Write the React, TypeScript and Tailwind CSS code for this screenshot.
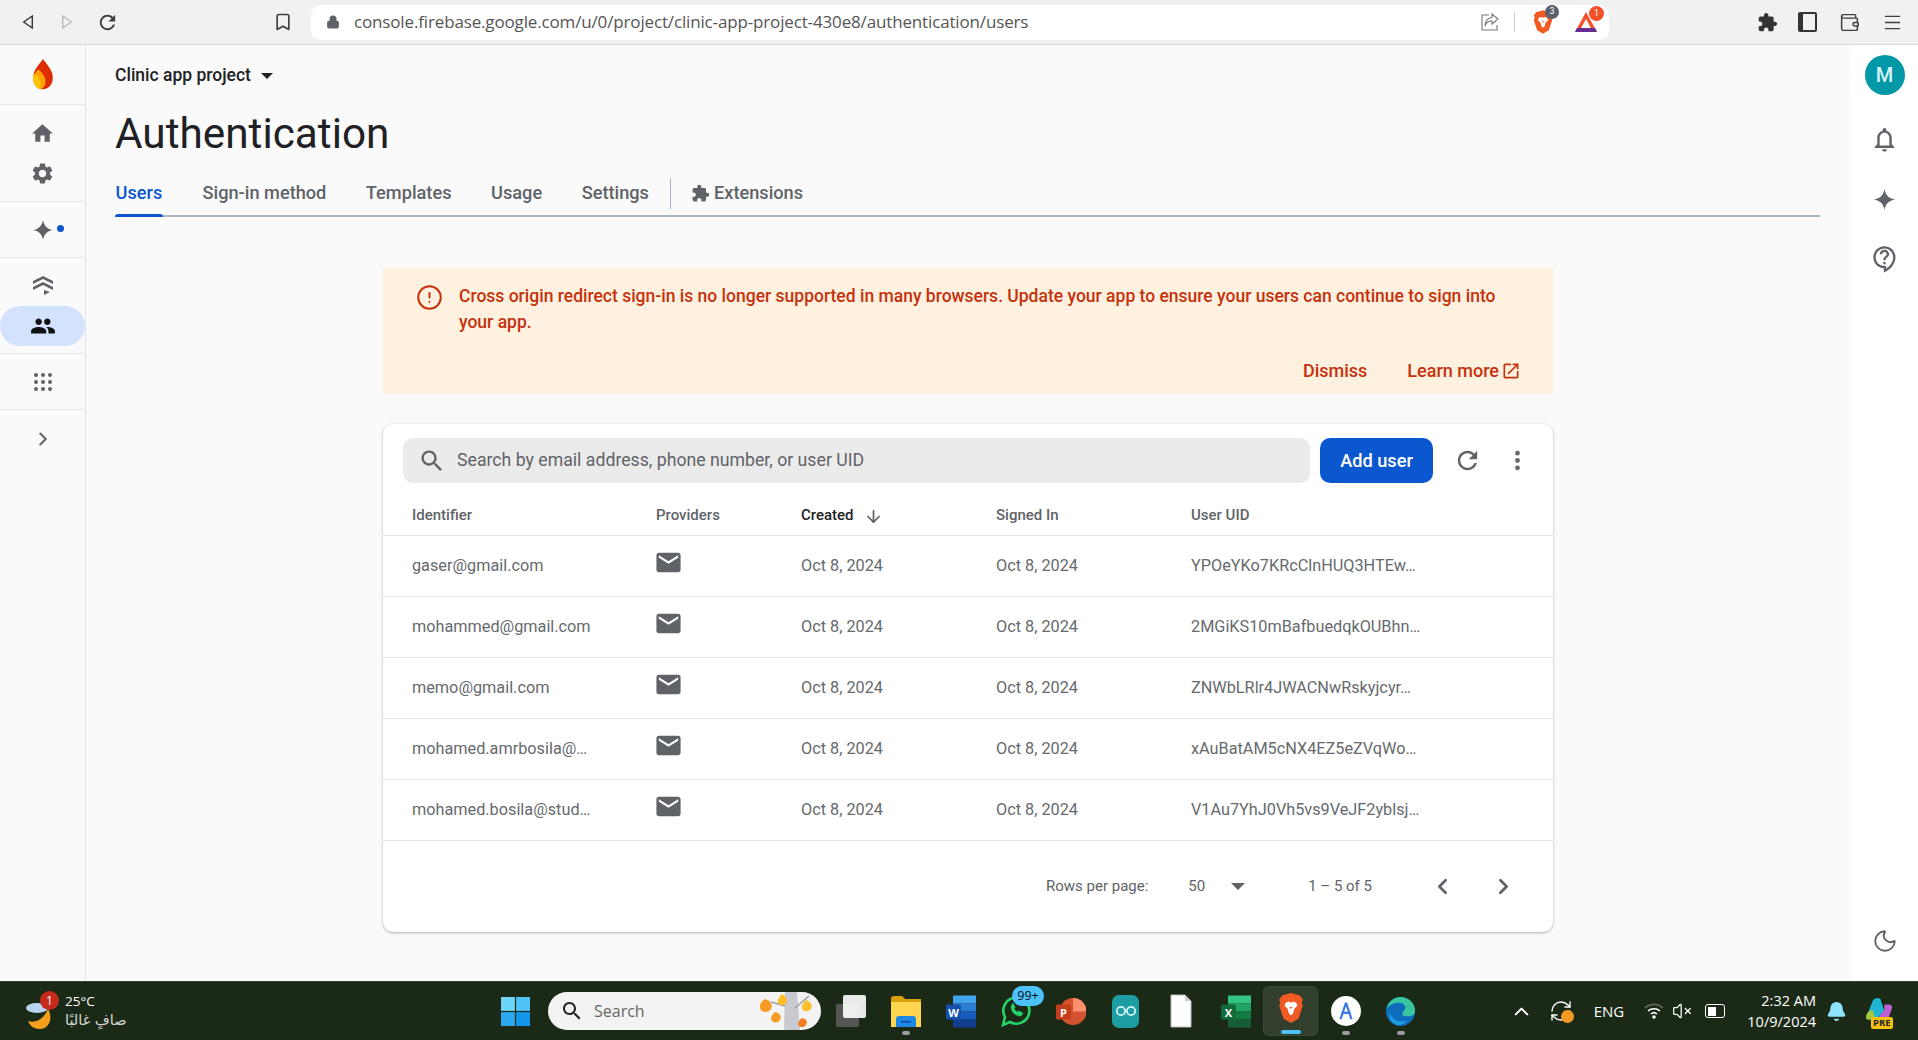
import { ChevronLeft, ChevronRight, Moon, EllipsisVertical, ChevronUp, VolumeX, Bookmark, Lock, CircleAlert, ArrowDown, RefreshCw, Menu, Wallet, Bell } from 'lucide-react';

const users = [
  { email: 'gaser@gmail.com', uid: 'YPOeYKo7KRcClnHUQ3HTEw…' },
  { email: 'mohammed@gmail.com', uid: '2MGiKS10mBafbuedqkOUBhn…' },
  { email: 'memo@gmail.com', uid: 'ZNWbLRlr4JWACNwRskyjcyr…' },
  { email: 'mohamed.amrbosila@…', uid: 'xAuBatAM5cNX4EZ5eZVqWo…' },
  { email: 'mohamed.bosila@stud…', uid: 'V1Au7YhJ0Vh5vs9VeJF2yblsj…' },
];

const tabs = ['Sign-in method', 'Templates', 'Usage', 'Settings'];

function Mat({ d, className }: { d: string; className?: string }) {
  return (
    <svg viewBox="0 0 24 24" fill="currentColor" className={className}>
      <path d={d} />
    </svg>
  );
}

const homePath = 'M10 20v-6h4v6h5v-8h3L12 3 2 12h3v8z';
const gearPath =
  'M19.14 12.94c.04-.3.06-.61.06-.94 0-.32-.02-.64-.07-.94l2.03-1.58a.49.49 0 0 0 .12-.61l-1.92-3.32a.488.488 0 0 0-.59-.22l-2.39.96c-.5-.38-1.03-.7-1.62-.94l-.36-2.54a.484.484 0 0 0-.48-.41h-3.84c-.24 0-.43.17-.47.41l-.36 2.54c-.59.24-1.13.57-1.62.94l-2.39-.96c-.22-.08-.47 0-.59.22L2.74 8.87c-.12.21-.08.47.12.61l2.03 1.58c-.05.3-.09.63-.09.94s.02.64.07.94l-2.03 1.58a.49.49 0 0 0-.12.61l1.92 3.32c.12.22.37.29.59.22l2.39-.96c.5.38 1.03.7 1.62.94l.36 2.54c.05.24.24.41.48.41h3.84c.24 0 .44-.17.47-.41l.36-2.54c.59-.24 1.13-.56 1.62-.94l2.39.96c.22.08.47 0 .59-.22l1.92-3.32c.12-.22.07-.47-.12-.61l-2.01-1.58zM12 15.6c-1.98 0-3.6-1.62-3.6-3.6s1.62-3.6 3.6-3.6 3.6 1.62 3.6 3.6-1.62 3.6-3.6 3.6z';
const peoplePath =
  'M16 11c1.66 0 2.99-1.34 2.99-3S17.66 5 16 5c-1.66 0-3 1.34-3 3s1.34 3 3 3zm-8 0c1.66 0 2.99-1.34 2.99-3S9.66 5 8 5C6.34 5 5 6.34 5 8s1.34 3 3 3zm0 2c-2.33 0-7 1.17-7 3.5V19h14v-2.5c0-2.33-4.67-3.5-7-3.5zm8 0c-.29 0-.62.02-.97.05 1.16.84 1.97 1.97 1.97 3.45V19h6v-2.5c0-2.33-4.67-3.5-7-3.5z';
const mailPath =
  'M20 4H4c-1.1 0-1.99.9-1.99 2L2 18c0 1.1.9 2 2 2h16c1.1 0 2-.9 2-2V6c0-1.1-.9-2-2-2zm0 4l-8 5-8-5V6l8 5 8-5v2z';
const puzzlePath =
  'M20.5 11H19V7c0-1.1-.9-2-2-2h-4V3.5C13 2.12 11.88 1 10.5 1S8 2.12 8 3.5V5H4c-1.1 0-1.99.9-1.99 2v3.8H3.5c1.49 0 2.7 1.21 2.7 2.7s-1.21 2.7-2.7 2.7H2V20c0 1.1.9 2 2 2h3.8v-1.5c0-1.49 1.21-2.7 2.7-2.7 1.49 0 2.7 1.21 2.7 2.7V22H17c1.1 0 2-.9 2-2v-4h1.5c1.38 0 2.5-1.12 2.5-2.5S21.88 11 20.5 11z';
const searchPath =
  'M15.5 14h-.79l-.28-.27C15.41 12.59 16 11.11 16 9.5 16 5.91 13.09 3 9.5 3S3 5.91 3 9.5 5.91 16 9.5 16c1.61 0 3.09-.59 4.23-1.57l.27.28v.79l5 4.99L20.49 19l-4.99-5zm-6 0C7.01 14 5 11.99 5 9.5S7.01 5 9.5 5 14 7.01 14 9.5 11.99 14 9.5 14z';
const sparkPath = 'M12 1c.9 6.2 4.8 10.1 11 11-6.2.9-10.1 4.8-11 11-.9-6.2-4.8-10.1-11-11 6.2-.9 10.1-4.8 11-11z';
const refreshPath =
  'M17.65 6.35C16.2 4.9 14.21 4 12 4c-4.42 0-7.99 3.58-7.99 8s3.57 8 7.99 8c3.73 0 6.84-2.55 7.73-6h-2.08c-.82 2.33-3.04 4-5.65 4-3.31 0-6-2.69-6-6s2.69-6 6-6c1.66 0 3.14.69 4.22 1.78L13 11h7V4l-2.35 2.35z';
const bellPath =
  'M12 22c1.1 0 2-.9 2-2h-4c0 1.1.89 2 2 2zm6-6v-5c0-3.07-1.64-5.64-4.5-6.32V4c0-.83-.67-1.5-1.5-1.5s-1.5.67-1.5 1.5v.68C7.63 5.36 6 7.92 6 11v5l-2 2v1h16v-1l-2-2zm-2 1H8v-6c0-2.48 1.51-4.5 4-4.5s4 2.02 4 4.5v6z';
const helpPath =
  'M11 23.59v-3.6c-5.01-.26-9-4.42-9-9.49C2 5.26 6.26 1 11.5 1S21 5.26 21 10.5c0 4.95-3.44 9.93-8.57 12.4l-1.43.69zM11.5 3C7.36 3 4 6.36 4 10.5S7.36 18 11.5 18H13v2.3c3.64-2.3 6-6.08 6-9.8C19 6.36 15.64 3 11.5 3zm-1 11.5h2v2h-2zm2-1.5h-2c0-3.25 3-3 3-5 0-1.1-.9-2-2-2s-2 .9-2 2h-2c0-2.21 1.79-4 4-4s4 1.79 4 4c0 2.5-3 2.75-3 5z';
const openPath =
  'M19 19H5V5h7V3H5c-1.11 0-2 .9-2 2v14c0 1.1.89 2 2 2h14c1.1 0 2-.9 2-2v-7h-2v7zM14 3v2h3.59l-9.83 9.83 1.41 1.41L19 6.41V10h2V3h-7z';

function BraveLogo({ className }: { className?: string }) {
  return (
    <svg viewBox="0 0 24 28" className={className}>
      <path d="M12 0l5 1.5 3 .5 3 4-1 3 1 3-4 12-7 4-7-4-4-12 1-3-1-3 3-4 3-.5z" fill="#f15a22" />
      <path d="M7 9l3-1 2 1 2-1 3 1 1 3-3 3-1 4-2 2-2-2-1-4-3-3z" fill="#fff" />
      <path d="M10.5 13h3l-1.5 2z" fill="#f15a22" />
    </svg>
  );
}

function Flame() {
  return (
    <svg viewBox="0 0 26 38" className="h-[31px] w-[26px]">
      <path d="M13 0c4 6 12 13 12 23 0 8-5 14-12 14S1 31 1 23C1 13 9 6 13 0z" fill="#dd2c00" />
      <path d="M7 13c5 3 9 9 9 15 0 4-2 8-6 9-5-1-9-6-9-13 0-4 3-8 6-11z" fill="#ffa000" />
      <path d="M2 18c6 2 9 8 8 13 0 3-1 5-2 5-4-2-7-6-7-12 0-2 0-4 1-6z" fill="#ffc400" />
    </svg>
  );
}

function Stack() {
  return (
    <svg viewBox="0 0 24 24" className="h-[24px] w-[24px]" fill="#5f6368">
      <path d="M12 3l10 5v3L12 6 2 11V8z" />
      <path d="M12 9l10 5v3L12 12 2 17v-3z" />
      <path d="M13 17l6 2-6 3z" />
    </svg>
  );
}

function NavGroup({ children, className }: { children: React.ReactNode; className?: string }) {
  return <div className={`flex w-full flex-col items-center border-b border-[#e4e6ea] ${className}`}>{children}</div>;
}

function SideNav() {
  return (
    <aside className="flex w-[86px] shrink-0 flex-col border-r border-[#e0e2e6] bg-[#fafafa]">
      <NavGroup className="h-[60px] justify-center">
        <Flame />
      </NavGroup>
      <NavGroup className="h-[97px] gap-[15px] pt-[16px] text-[#5f6368]">
        <Mat d={homePath} className="h-[25px] w-[25px]" />
        <Mat d={gearPath} className="h-[25px] w-[25px]" />
      </NavGroup>
      <NavGroup className="relative h-[56px] justify-center text-[#5f6368]">
        <Mat d={sparkPath} className="h-[22px] w-[22px]" />
        <span className="absolute left-[57px] top-[23px] h-[7px] w-[7px] rounded-full bg-[#0b57d0]" />
      </NavGroup>
      <NavGroup className="h-[96px]">
        <div className="flex h-[48px] w-full items-center justify-center pt-[6px]">
          <Stack />
        </div>
        <div className="flex h-[40px] w-full items-center justify-center rounded-full bg-[#d3e3fd] text-[#111]">
          <Mat d={peoplePath} className="h-[26px] w-[26px]" />
        </div>
      </NavGroup>
      <NavGroup className="h-[56px] justify-center">
        <div className="grid grid-cols-3 gap-x-[3px] gap-y-[3px]">
          {Array.from({ length: 9 }).map((_, i) => (
            <span key={i} className="h-[4px] w-[4px] rounded-full bg-[#5f6368]" />
          ))}
        </div>
      </NavGroup>
      <div className="flex h-[58px] items-center justify-center text-[#5f6368]">
        <ChevronRight size={22} strokeWidth={2.2} />
      </div>
    </aside>
  );
}

function BrowserBar() {
  return (
    <header className="flex h-[45px] shrink-0 items-center border-b border-[#d9d9d9] bg-[#f1f1f1] text-[#3c4043]">
      <div className="flex w-[311px] shrink-0 items-center">
        <svg viewBox="0 0 14 18" className="ml-[22px] h-[18px] w-[12px]" fill="none" stroke="#333" strokeWidth="1.6">
          <path d="M12 2L2 9l10 7z" />
        </svg>
        <svg viewBox="0 0 14 18" className="ml-[27px] h-[18px] w-[12px]" fill="none" stroke="#bbb" strokeWidth="1.6">
          <path d="M2 2l10 7-10 7z" />
        </svg>
        <Mat d={refreshPath} className="ml-[23px] h-[23px] w-[23px]" />
        <Bookmark size={20} strokeWidth={2} className="ml-[154px]" />
      </div>
      <div className="flex h-[35px] w-[1298px] shrink-0 items-center rounded-[10px] bg-white">
        <Lock size={14} fill="#5f6368" stroke="#5f6368" className="ml-[15px]" />
        <span className="ml-[14px] font-['Open_Sans',sans-serif] text-[17px] tracking-[-0.15px] text-[#555]">
          console.firebase.google.com/u/0/project/clinic-app-project-430e8/authentication/users
        </span>
        <svg viewBox="0 0 20 20" className="ml-auto h-[20px] w-[20px]" fill="none" stroke="#777" strokeWidth="1.1">
          <path d="M9 3H2v15h15v-5" />
          <path d="M12 2l6 5-6 5V9C8 9 6 11 5 14c0-5 3-8 7-8.500z" />
        </svg>
        <div className="ml-[14px] h-[20px] w-px bg-[#ccc]" />
        <div className="relative ml-[18px] flex w-[30px]">
          <BraveLogo className="h-[24px] w-[20px]" />
          <span className="absolute left-[12px] top-[-5px] flex h-[14px] w-[14px] items-center justify-center rounded-full bg-[#5b5f6b] text-[9px] text-white">
            3
          </span>
        </div>
        <div className="relative ml-[11px] mr-[5px] flex w-[30px]">
          <svg viewBox="0 0 24 22" className="h-[22px] w-[24px]">
            <path d="M12 1l11 20H1z" fill="#f4502a" />
            <path d="M12 8l5.5 10h-11z" fill="#fff" />
            <path d="M1 21l2-4h18l2 4z" fill="#662d91" />
          </svg>
          <span className="absolute left-[15px] top-[-5px] flex h-[15px] w-[15px] items-center justify-center rounded-full bg-[#f4502a] text-[9px] text-white">
            1
          </span>
        </div>
      </div>
      <div className="flex flex-1 items-center">
        <Mat d={puzzlePath} className="ml-[148px] h-[21px] w-[21px] text-[#333]" />
        <div className="ml-[20px] flex h-[20px] w-[19px] rounded-[2px] border-2 border-l-[5px] border-[#333]" />
        <Wallet size={21} strokeWidth={1.7} className="ml-[22px]" />
        <Menu size={21} strokeWidth={1.7} className="ml-[22px]" />
      </div>
    </header>
  );
}

function Banner() {
  return (
    <section className="h-[127px] w-[1170px] bg-[#fff1df] text-[#c5320d]">
      <div className="flex pl-[33px] pt-[17px]">
        <CircleAlert size={27} strokeWidth={1.8} className="shrink-0" />
        <p className="ml-[16px] w-[1050px] text-[17.5px] font-medium leading-[25.5px]">
          Cross origin redirect sign-in is no longer supported in many browsers. Update your app to ensure your users can continue to sign into your app.
        </p>
      </div>
      <div className="mt-[22px] flex items-center justify-end pr-[32px] text-[18px] font-medium">
        <span>Dismiss</span>
        <span className="ml-[40px]">Learn more</span>
        <Mat d={openPath} className="ml-[2px] h-[20px] w-[20px]" />
      </div>
    </section>
  );
}

function UsersTable() {
  const cols = 'grid grid-cols-[244px_145px_195px_195px_1fr] pl-[29px]';
  return (
    <section className="mt-[30px] h-[508px] w-[1170px] rounded-[10px] bg-white shadow-[0_1px_3px_rgba(0,0,0,0.3)]">
      <div className="flex items-center pl-[20px] pt-[14px]">
        <div className="flex h-[45px] w-[907px] items-center rounded-[10px] bg-[#ebebeb] pl-[15px]">
          <Mat d={searchPath} className="h-[28px] w-[28px] text-[#5f6368]" />
          <span className="ml-[11px] text-[17.7px] text-[#5f6368]">Search by email address, phone number, or user UID</span>
        </div>
        <button type="button" className="ml-[10px] h-[45px] w-[113px] rounded-[10px] bg-[#0b57d0] text-[18.2px] font-medium text-white">
          Add user
        </button>
        <Mat d={refreshPath} className="ml-[20px] h-[29px] w-[29px] text-[#5f6368]" />
        <EllipsisVertical size={25} strokeWidth={2.6} className="ml-[23px] text-[#5f6368]" />
      </div>
      <div className={`${cols} h-[53px] items-center border-b border-[#e3e5e8] pt-[12px] text-[15px] font-medium text-[#5f6368]`}>
        <span>Identifier</span>
        <span>Providers</span>
        <span className="flex items-center text-[#202124]">
          Created
          <ArrowDown size={19} strokeWidth={2.2} className="ml-[10px] mt-[2px] text-[#5f6368]" />
        </span>
        <span>Signed In</span>
        <span>User UID</span>
      </div>
      {users.map(u => (
        <div key={u.email} className={`${cols} h-[61px] items-center border-b border-[#e3e5e8] text-[16.25px] text-[#666a6e]`}>
          <span>{u.email}</span>
          <Mat d={mailPath} className="mb-[8px] ml-[-2px] h-[29px] w-[29px] text-[#5f6368]" />
          <span>Oct 8, 2024</span>
          <span>Oct 8, 2024</span>
          <span>{u.uid}</span>
        </div>
      ))}
      <div className="flex h-[90px] items-center text-[15px] text-[#5f6368]">
        <span className="ml-[663px]">Rows per page:</span>
        <span className="ml-[40px]">50</span>
        <span className="ml-[26px] h-0 w-0 border-x-[7px] border-t-[7px] border-x-transparent border-t-[#5f6368]" />
        <span className="ml-[63px]">1 – 5 of 5</span>
        <ChevronLeft size={25} strokeWidth={2.6} className="ml-[58px]" />
        <ChevronRight size={25} strokeWidth={2.6} className="ml-[36px]" />
      </div>
    </section>
  );
}

function RightRail() {
  return (
    <aside className="flex w-[67px] shrink-0 flex-col items-center bg-white pt-[10px] text-[#5f6368]">
      <div className="flex h-[40px] w-[40px] items-center justify-center rounded-full bg-[#0097a7] text-[20px] font-medium text-[#d5f3f6]">M</div>
      <Mat d={bellPath} className="mt-[30px] h-[29px] w-[29px]" />
      <Mat d={sparkPath} className="mt-[34px] h-[23px] w-[23px]" />
      <Mat d={helpPath} className="mt-[34px] h-[28px] w-[28px]" />
      <Moon size={26} strokeWidth={1.8} className="mb-[27px] mt-auto" />
    </aside>
  );
}

function AppSlot({ children, active, running }: { children: React.ReactNode; active?: boolean; running?: boolean }) {
  return (
    <div className={`relative flex h-[50px] w-[55px] shrink-0 items-center justify-center rounded-[6px] ${active ? 'border border-white/5 bg-white/10' : ''}`}>
      {children}
      {active && <span className="absolute bottom-[1px] h-[4px] w-[20px] rounded-full bg-[#4cc2ff]" />}
      {running && <span className="absolute bottom-[1px] h-[4px] w-[8px] rounded-full bg-[#9a9a9a]" />}
    </div>
  );
}

function Taskbar() {
  return (
    <footer className="flex h-[59px] shrink-0 items-center border-t border-[#3a4238] bg-[#1b2a16] font-['Open_Sans',sans-serif] text-white">
      <div className="flex w-[501px] shrink-0 items-center pl-[25px]">
        <div className="relative h-[36px] w-[30px]">
          <svg viewBox="0 0 30 36" className="h-[36px] w-[30px]">
            <path d="M3 28c6 2 15 0 20-12 5 8 2 20-8 20-6 0-10-3-12-8z" fill="#f59e1c" />
            <ellipse cx="12" cy="15" rx="11" ry="5" fill="#b9d3f5" />
          </svg>
          <span className="absolute left-[15px] top-[-2px] flex h-[19px] w-[19px] items-center justify-center rounded-full bg-[#c42b1c] text-[12px]">1</span>
        </div>
        <div className="ml-[10px] flex flex-col leading-[19px]">
          <span className="text-[13.5px]">25°C</span>
          <span className="font-['DejaVu_Sans',sans-serif] text-[14.5px] text-[#d5d5d5]">صافٍ غالبًا</span>
        </div>
      </div>
      <svg viewBox="0 0 24 24" className="h-[29px] w-[29px] shrink-0">
        <path d="M0 0h11.5v11.5H0z" fill="#6fd5f7" />
        <path d="M12.5 0H24v11.5H12.5z" fill="#4fc3f7" />
        <path d="M0 12.5h11.5V24H0z" fill="#2aa8f0" />
        <path d="M12.5 12.5H24V24H12.5z" fill="#1296ea" />
      </svg>
      <div className="ml-[18px] flex h-[38px] w-[273px] shrink-0 items-center overflow-hidden rounded-full bg-[#f3f3f3] pl-[12px] text-[#666]">
        <Mat d={searchPath} className="h-[24px] w-[24px] text-[#222]" />
        <span className="ml-[10px] text-[16px]">Search</span>
        <svg viewBox="0 0 60 38" className="ml-auto mr-[4px] h-[38px] w-[60px]">
          <path d="M28 0h12l3 38H27z" fill="#c9c9d2" />
          <path d="M38 16l14-12M28 14L14 10" stroke="#9b9ba5" strokeWidth="1.5" />
          <path d="M8 7c6 2 8 6 6 10-2 3-6 4-9 2-4-3-2-9 3-12z" fill="#f59a23" />
          <path d="M25 2c4 3 6 5 4 9-2 3-6 3-8 0-1-3 1-6 4-9z" fill="#fbbf24" />
          <path d="M49 8c5 2 7 5 5 9-2 3-7 3-9 0-1-3 1-6 4-9z" fill="#fbc02d" />
          <path d="M18 20c5 1 7 4 5 8-2 3-6 3-8 1-2-3 0-7 3-9z" fill="#f59a23" />
          <path d="M45 26c4 1 6 3 4 7-1 2-5 3-7 1-2-2 0-6 3-8z" fill="#f47b20" />
        </svg>
      </div>
      <div className="ml-[2px] flex items-center">
        <AppSlot>
          <div className="relative h-[32px] w-[30px]">
            <div className="absolute bottom-0 left-0 h-[23px] w-[23px] rounded-[2px] bg-[#555]" />
            <div className="absolute right-0 top-0 h-[23px] w-[23px] rounded-[2px] bg-white/90" />
          </div>
        </AppSlot>
        <AppSlot running>
          <svg viewBox="0 0 30 32" className="h-[32px] w-[30px]">
            <path d="M0 4q0-3 3-3h8l3 3h16v4H0z" fill="#d9a008" />
            <path d="M0 7h30v25H0z" fill="#ffd54f" />
            <path d="M5 24q0-3 3-3h14q3 0 3 3v8H5z" fill="#1e88e5" />
            <path d="M10 26h10v1.5H10z" fill="#0d47a1" />
          </svg>
        </AppSlot>
        <AppSlot>
          <svg viewBox="0 0 30 32" className="h-[33px] w-[30px]">
            <path d="M7 0h23v8H7z" fill="#41a5ee" />
            <path d="M7 8h23v8H7z" fill="#2b7cd3" />
            <path d="M7 16h23v8H7z" fill="#185abd" />
            <path d="M7 24h23v8H7z" fill="#103f91" />
            <rect x="0" y="9" width="15" height="15" rx="1.5" fill="#1650ac" />
            <text x="7.5" y="21" textAnchor="middle" fontSize="11" fontWeight="700" fill="#fff">W</text>
          </svg>
        </AppSlot>
        <AppSlot>
          <svg viewBox="0 0 32 32" className="h-[32px] w-[32px]" fill="none" stroke="#25d366" strokeWidth="2.6">
            <path d="M3 30l2-8a13 13 0 1 1 5 5z" />
            <path d="M11 11c0 6 4 10 10 10l2-3-4-2-2 1-3-3 1-2-2-4z" fill="#25d366" strokeWidth="0.5" />
          </svg>
          <span className="absolute left-[24px] top-[0px] flex h-[20px] w-[32px] items-center justify-center rounded-full bg-[#4cc2ff] text-[12.5px] text-[#111]">99+</span>
        </AppSlot>
        <AppSlot>
          <svg viewBox="0 0 30 32" className="h-[33px] w-[30px]">
            <circle cx="17" cy="16" r="13.5" fill="#d35230" />
            <path d="M17 16V2.5A13.5 13.5 0 0 1 30.5 16z" fill="#ff8f6b" />
            <rect x="0" y="9" width="15" height="15" rx="1.5" fill="#c43e1c" />
            <text x="7.5" y="21" textAnchor="middle" fontSize="11" fontWeight="700" fill="#fff">P</text>
          </svg>
        </AppSlot>
        <AppSlot>
          <div className="flex h-[33px] w-[27px] items-center justify-center rounded-[7px] bg-[#1d9ea3]">
            <svg viewBox="0 0 24 12" className="h-[12px] w-[22px]" fill="none" stroke="#d7f4f5" strokeWidth="2">
              <circle cx="6.5" cy="6" r="4.5" />
              <circle cx="17.5" cy="6" r="4.5" />
            </svg>
          </div>
        </AppSlot>
        <AppSlot>
          <svg viewBox="0 0 22 34" className="h-[34px] w-[22px]">
            <path d="M1 1h14l6 6v26H1z" fill="#fff" stroke="#bbb" />
            <path d="M15 1v6h6z" fill="#ccc" />
          </svg>
        </AppSlot>
        <AppSlot>
          <svg viewBox="0 0 30 32" className="h-[33px] w-[30px]">
            <path d="M7 0h23v8H7z" fill="#33c481" />
            <path d="M7 8h23v8H7z" fill="#21a366" />
            <path d="M7 16h23v8H7z" fill="#107c41" />
            <path d="M7 24h23v8H7z" fill="#185c37" />
            <rect x="0" y="9" width="15" height="15" rx="1.5" fill="#0f6b3a" />
            <text x="7.5" y="21" textAnchor="middle" fontSize="11" fontWeight="700" fill="#fff">X</text>
          </svg>
        </AppSlot>
        <AppSlot active>
          <BraveLogo className="mb-[6px] h-[30px] w-[26px]" />
        </AppSlot>
        <AppSlot running>
          <div className="flex h-[30px] w-[30px] items-center justify-center rounded-full bg-white">
            <svg viewBox="0 0 24 24" className="h-[22px] w-[22px]" fill="none" stroke="#3b78e7" strokeWidth="2.4">
              <path d="M12 3L6 21M12 3l6 18M7 14h10" />
            </svg>
          </div>
        </AppSlot>
        <AppSlot running>
          <svg viewBox="0 0 32 32" className="h-[33px] w-[31px]">
            <circle cx="16" cy="16" r="15" fill="#0f6cbd" />
            <path d="M1 15C3 5 10 1 16 1c9 0 15 7 15 14 0 5-4 6-8 6-3 0-5-1-5-3 0-3 3-3 3-6 0-3-3-5-7-5C8 7 3 10 1 15z" fill="#37c6a0" />
            <path d="M14 30c-7-1-11-7-9-14 1 6 5 10 11 10 3 0 5 0 7-1-2 3-5 5-9 5z" fill="#1b9de2" />
          </svg>
        </AppSlot>
      </div>
      <div className="ml-[73px] flex w-[40px] justify-center">
        <ChevronUp size={23} strokeWidth={2.2} />
      </div>
      <div className="relative flex w-[40px] justify-center">
        <RefreshCw size={24} strokeWidth={1.4} />
        <span className="absolute left-[20px] top-[11px] h-[13px] w-[13px] rounded-full bg-[#f59a23]" />
      </div>
      <span className="flex w-[56px] justify-center text-[15px]">ENG</span>
      <div className="flex w-[34px] justify-center">
        <svg viewBox="0 0 20 16" className="h-[16px] w-[20px]" fill="none" stroke="#fff" strokeWidth="1.6">
          <path d="M1 5a13 13 0 0 1 18 0" stroke="#666" />
          <path d="M4 8a9 9 0 0 1 12 0M7 11a4.500 4.500 0 0 1 6 0" />
          <circle cx="10" cy="14" r="1" fill="#fff" />
        </svg>
      </div>
      <div className="flex w-[22px] justify-center">
        <VolumeX size={20} strokeWidth={1.5} />
      </div>
      <div className="flex w-[44px] justify-center">
        <div className="flex h-[14px] w-[20px] items-center rounded-[3px] border border-white p-[1.5px]">
          <span className="h-full w-[8px] bg-white" />
        </div>
      </div>
      <div className="flex w-[79px] flex-col items-end text-[14.5px] leading-[21px]">
        <span>2:32 AM</span>
        <span>10/9/2024</span>
      </div>
      <div className="flex w-[40px] justify-center">
        <Bell size={21} fill="#8fe3ff" stroke="#8fe3ff" />
      </div>
      <div className="relative flex w-[46px] justify-center">
        <svg viewBox="0 0 28 28" className="h-[30px] w-[30px]">
          <path d="M2 20L8 5q1-3 4-3h3l4 12-8 8H5q-4 0-3-2z" fill="#1fb6d6" />
          <path d="M12 22l7-9V8h4q4 0 3 4l-3 8q-1 3-4 3h-5z" fill="#c15fd6" />
          <path d="M2 20q0-6 6-7l3 9H5q-3 0-3-2z" fill="#a7c93d" />
        </svg>
        <span className="absolute bottom-[-3px] left-[15px] rounded-[2px] bg-[#f5c211] px-[2px] text-[9.5px] font-bold leading-[12px] text-[#222]">PRE</span>
      </div>
    </footer>
  );
}

export default function App() {
  return (
    <div className="flex h-[1040px] w-[1918px] flex-col overflow-hidden bg-[#fafafa] font-['Roboto',sans-serif]">
      <BrowserBar />
      <div className="flex min-h-0 flex-1">
        <SideNav />
        <main className="flex min-w-0 flex-1 flex-col pl-[29px]">
          <div className="flex h-[60px] items-center pt-[1px] text-[17.5px] font-medium text-[#202124]">
            Clinic app project
            <span className="ml-[10px] h-0 w-0 border-x-[6.5px] border-t-[6px] border-x-transparent border-t-[#202124]" />
          </div>
          <h1 className="mt-[5px] text-[42.3px] font-normal leading-[48px] text-[#202124]">Authentication</h1>
          <nav className="mt-[15px] flex h-[44px] w-[1705px] items-center border-b-2 border-[#aab5c4] pb-[2px] text-[18.2px] font-medium text-[#5f6368]">
            <span className="relative flex h-full w-[48px] items-center justify-center text-[#0b57d0]">
              Users
              <span className="absolute bottom-[-4px] left-0 h-[3px] w-full rounded-t-[3px] bg-[#0b57d0]" />
            </span>
            {tabs.map(t => (
              <span key={t} className="ml-[39.5px]">
                {t}
              </span>
            ))}
            <span className="ml-[21px] h-[31px] w-px bg-[#aab5c4]" />
            <Mat d={puzzlePath} className="ml-[20px] h-[19px] w-[19px] text-[#5f6368]" />
            <span className="ml-[4px]">Extensions</span>
          </nav>
          <div className="flex flex-1 flex-col pl-[268px] pt-[50px]">
            <Banner />
            <UsersTable />
          </div>
        </main>
        <RightRail />
      </div>
      <Taskbar />
    </div>
  );
}
